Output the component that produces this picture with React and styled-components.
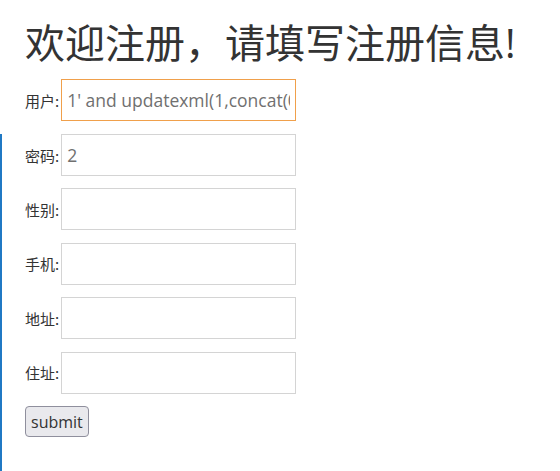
import React, { useEffect, useRef } from "react";
import styled, { createGlobalStyle } from "styled-components";

const GlobalStyle = createGlobalStyle`
  html, body {
    margin: 0;
    padding: 0;
    background: #fff;
  }
  body {
    font-family: "Open Sans", "Noto Sans CJK SC", sans-serif;
    color: #333;
  }
`;

const Page = styled.div`
  min-height: 471px;
  display: flex;
  flex-direction: column;
`;

const Top = styled.div`
  padding: 0 25px;
`;

const Title = styled.h1`
  margin: 20px 0 13px;
  font-size: 40px;
  line-height: 46px;
  font-weight: 400;
  color: #333;
  white-space: nowrap;
`;

const Rest = styled.div`
  flex: 1;
  border-left: 2px solid #2079c4;
  padding: 0 23px;
  display: flex;
  flex-direction: column;
`;

const Row = styled.div`
  display: flex;
  align-items: center;
  height: 42px;
  margin-bottom: ${(p) => p.$gap || "12.45px"};
`;

const Label = styled.label`
  flex-shrink: 0;
  padding-right: 2px;
  font-size: 15px;
  color: #333;
  font-family: "Noto Sans CJK SC", "Open Sans", sans-serif;
  white-space: nowrap;
`;

const Input = styled.input`
  box-sizing: border-box;
  width: 235px;
  height: 42px;
  border: 1px solid #d4d4d4;
  padding: 0 5px;
  font-family: "Open Sans", sans-serif;
  font-size: 17.5px;
  color: #707070;
  background: #fff;
  outline: none;
  border-radius: 0;
  margin: 0;
  caret-color: #333;

  &:focus {
    border-color: #f0a04b;
  }
`;

const Submit = styled.button`
  align-self: flex-start;
  box-sizing: border-box;
  height: 31px;
  padding: 0 5px;
  font-family: "Open Sans", sans-serif;
  font-size: 16px;
  color: #333;
  background: #e9e9ed;
  border: 1px solid #8f8f9d;
  border-radius: 4px;
`;

const fields = [
  { label: "密码:", value: "2" },
  { label: "性别:", value: "" },
  { label: "手机:", value: "" },
  { label: "地址:", value: "" },
  { label: "住址:", value: "" },
];

const App = () => {
  const userRef = useRef(null);

  useEffect(() => {
    const el = userRef.current;
    if (!el) return;
    el.focus();
    el.setSelectionRange(0, 0);
    el.scrollLeft = 0;
  }, []);

  return (
    <Page>
      <GlobalStyle />
      <Top>
        <Title>欢迎注册，请填写注册信息!</Title>
        <Row $gap="13px">
          <Label>用户:</Label>
          <Input
            ref={userRef}
            type="text"
            defaultValue="1' and updatexml(1,concat(0x7e,(select database()),0x7e),1)#"
          />
        </Row>
      </Top>
      <Rest>
        {fields.map((f) => (
          <Row key={f.label}>
            <Label>{f.label}</Label>
            <Input type="text" defaultValue={f.value} />
          </Row>
        ))}
        <Submit type="button">submit</Submit>
      </Rest>
    </Page>
  );
};

export default App;
